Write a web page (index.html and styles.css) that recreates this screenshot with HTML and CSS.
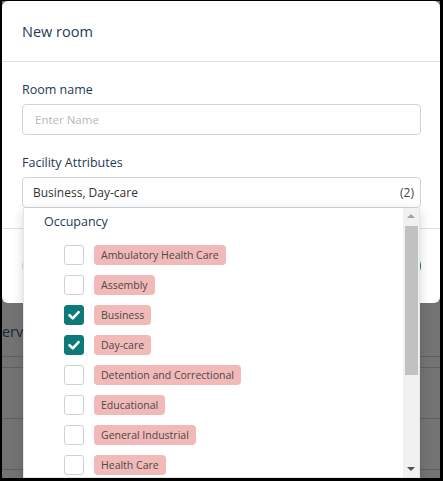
FILE: index.html
```html
<!DOCTYPE html>
<html lang="en">
<head>
<meta charset="utf-8">
<title>New room</title>
<link rel="stylesheet" href="styles.css">
</head>
<body>
<div class="screen">
  <!-- page behind the dialog -->
  <div class="page">
    <div class="page-top"></div>
    <div class="page-head"><span class="page-title">Services</span></div>
    <div class="page-sub"></div>
    <div class="page-row"></div>
    <div class="page-row"></div>
  </div>
  <div class="backdrop"></div>

  <div class="modal">
    <div class="modal-header">New room</div>
    <div class="modal-body">
      <div class="field">
        <label class="field-label">Room name</label>
        <div class="input"><span class="placeholder">Enter Name</span></div>
      </div>
      <div class="field">
        <label class="field-label">Facility Attributes</label>
        <div class="select-wrap">
          <div class="select">
            <span class="select-value">Business, Day-care</span>
            <span class="select-count">(2)</span>
          </div>
          <div class="dropdown">
            <div class="dropdown-list">
              <div class="group-title">Occupancy</div>
              <ul class="options">
                <li class="option"><span class="check"></span><span class="tag">Ambulatory Health Care</span></li>
                <li class="option"><span class="check"></span><span class="tag">Assembly</span></li>
                <li class="option"><span class="check checked"><svg viewBox="0 0 20 20" width="20" height="20"><polyline points="5.5,10.2 8.8,13.3 14.6,7.2" fill="none" stroke="#fff" stroke-width="2.6" stroke-linecap="round" stroke-linejoin="round"/></svg></span><span class="tag">Business</span></li>
                <li class="option"><span class="check checked"><svg viewBox="0 0 20 20" width="20" height="20"><polyline points="5.5,10.2 8.8,13.3 14.6,7.2" fill="none" stroke="#fff" stroke-width="2.6" stroke-linecap="round" stroke-linejoin="round"/></svg></span><span class="tag">Day-care</span></li>
                <li class="option"><span class="check"></span><span class="tag">Detention and Correctional</span></li>
                <li class="option"><span class="check"></span><span class="tag">Educational</span></li>
                <li class="option"><span class="check"></span><span class="tag">General Industrial</span></li>
                <li class="option"><span class="check"></span><span class="tag">Health Care</span></li>
              </ul>
            </div>
            <div class="scrollbar">
              <div class="sb-btn"><span class="arrow-up"></span></div>
              <div class="sb-track"><div class="sb-thumb"></div></div>
              <div class="sb-btn"><span class="arrow-down"></span></div>
            </div>
          </div>
        </div>
      </div>
    </div>
    <div class="modal-footer">
      <button class="btn btn-cancel">Cancel</button>
      <button class="btn btn-save">Save</button>
    </div>
  </div>
</div>
</body>
</html>
```

FILE: styles.css
```css
* {
  box-sizing: border-box;
}

html, body {
  margin: 0;
  padding: 0;
  background: #000;
}

body {
  font-family: "Open Sans", "Noto Sans", sans-serif;
  width: 443px;
  height: 481px;
  overflow: hidden;
}

.screen {
  position: relative;
  margin: 1px 0 0 2px;
  width: 438px;
  height: 477px;
  overflow: hidden;
  background: #fff;
}

/* page under the dialog */
.page {
  display: flex;
  flex-direction: column;
}

.page-top {
  height: 305px;
}

.page-head {
  height: 51px;
  border-bottom: 1px solid #d2d2d2;
  display: flex;
  align-items: center;
}

.page-title {
  margin-left: -8px;
  font-size: 14.5px;
  color: #3a5a80;
}

.page-sub {
  height: 11px;
  border-bottom: 1px solid #d2d2d2;
}

.page-row {
  height: 51px;
  border-bottom: 1px solid #d2d2d2;
}

.backdrop {
  position: absolute;
  inset: 0;
  background: rgba(0, 0, 0, 0.55);
}

/* dialog */
.modal {
  position: absolute;
  top: 0;
  left: 0;
  width: 438px;
  height: 302px;
  background: #fff;
  border-radius: 6px;
  display: flex;
  flex-direction: column;
}

.modal-header {
  height: 61px;
  padding: 0 20px;
  display: flex;
  align-items: center;
  font-size: 14.5px;
  color: #1f3a56;
  border-bottom: 1px solid #dcdfe3;
}

.modal-body {
  padding: 18px 19px 20px 20px;
  display: flex;
  flex-direction: column;
  gap: 18px;
  border-bottom: 1px solid #dcdfe3;
}

.field {
  display: flex;
  flex-direction: column;
}

.field-label {
  font-size: 12.5px;
  line-height: 20px;
  color: #1f3a56;
  margin-bottom: 4px;
}

.input,
.select {
  height: 31px;
  border: 1px solid #cfd5db;
  border-radius: 4px;
  display: flex;
  align-items: center;
}

.input {
  padding: 0 12px;
}

.placeholder {
  font-size: 11.5px;
  color: #b3b9c0;
}

.select-wrap {
  position: relative;
}

.select {
  padding: 0 6px 0 10px;
  justify-content: space-between;
  font-size: 12px;
  color: #333;
}

.select-count {
  color: #444;
}

.modal-footer {
  flex: 1;
  padding: 0 19px 0 20px;
  display: flex;
  align-items: center;
  justify-content: space-between;
}

.btn {
  height: 32px;
  padding: 0 22px;
  border-radius: 16px;
  font-family: inherit;
  font-size: 13px;
}

.btn-cancel {
  background: #fff;
  border: 1px solid #cfd5db;
  color: #1f3a56;
}

.btn-save {
  background: #0b7a78;
  border: 1px solid #0b7a78;
  color: #fff;
}

/* open option list */
.dropdown {
  position: absolute;
  top: 100%;
  left: 1px;
  width: 397px;
  height: 270px;
  background: #fff;
  border: 1px solid #e3e6e9;
  border-top: none;
  box-shadow: 0 3px 10px rgba(0, 0, 0, 0.16);
  display: flex;
  z-index: 2;
}

.dropdown-list {
  flex: 1;
  overflow: hidden;
}

.group-title {
  height: 26px;
  padding-left: 20px;
  display: flex;
  align-items: center;
  font-size: 12.5px;
  color: #1f3a56;
}

.options {
  list-style: none;
  margin: 0;
  padding: 6px 0 0 40px;
}

.option {
  height: 30px;
  display: flex;
  align-items: center;
  gap: 10px;
}

.check {
  width: 20px;
  height: 20px;
  border: 1px solid #c9d1d9;
  border-radius: 3px;
  background: #fff;
  display: flex;
  align-items: center;
  justify-content: center;
}

.check.checked {
  background: #0b7a78;
  border-color: #0b7a78;
}

.check svg {
  display: block;
  flex: none;
}

.tag {
  height: 20px;
  padding: 0 7px;
  border-radius: 4px;
  background: #f2b9b9;
  color: #4a4a4a;
  font-size: 10.5px;
  display: flex;
  align-items: center;
}

/* scrollbar */
.scrollbar {
  width: 16px;
  background: #f1f1f1;
  display: flex;
  flex-direction: column;
}

.sb-btn {
  height: 16px;
  display: flex;
  align-items: center;
  justify-content: center;
}

.arrow-up {
  width: 0;
  height: 0;
  border-left: 4px solid transparent;
  border-right: 4px solid transparent;
  border-bottom: 4px solid #a3a3a3;
}

.arrow-down {
  width: 0;
  height: 0;
  border-left: 4px solid transparent;
  border-right: 4px solid transparent;
  border-top: 4px solid #505050;
}

.sb-track {
  flex: 1;
  padding: 2px 1px 0 2px;
}

.sb-thumb {
  height: 149px;
  background: #c1c1c1;
}
```
